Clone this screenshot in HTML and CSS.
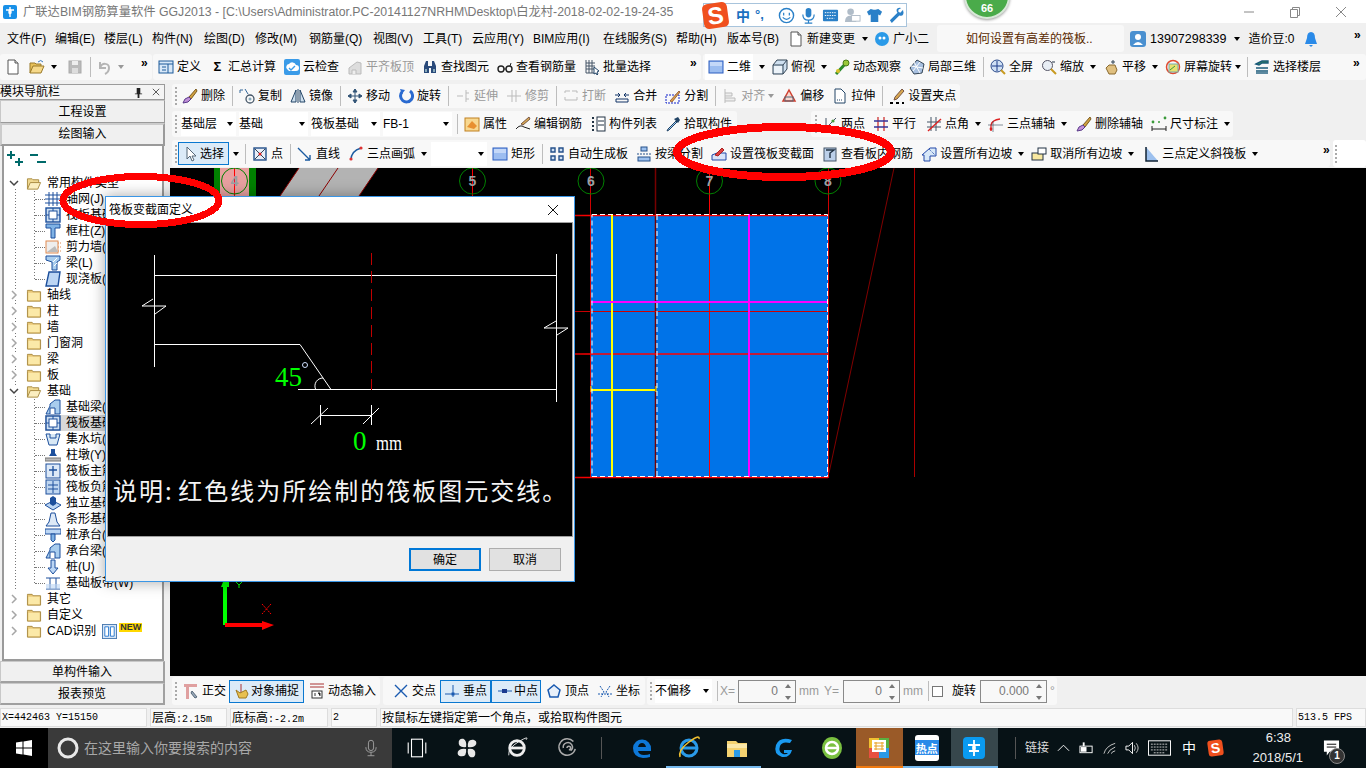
FILE: index.html
```html
<!DOCTYPE html>
<html lang="zh-CN">
<head>
<meta charset="utf-8">
<title>广联达BIM钢筋算量软件 GGJ2013</title>
<link rel="stylesheet" href="styles.css">
</head>
<body>
<svg class="sprite" xmlns="http://www.w3.org/2000/svg">
<defs>
<symbol id="new" viewBox="0 0 16 16"><path d="M3 1h7l3 3v11H3z" fill="#fff" stroke="#555"/><path d="M10 1v3h3" fill="#ddd" stroke="#555"/></symbol>
<symbol id="open" viewBox="0 0 16 16"><path d="M1 14V4h5l1 1h5v3" fill="#e8c15a" stroke="#9a7a2a"/><path d="M1 14l3-7h11l-3 7z" fill="#f6d98a" stroke="#9a7a2a"/><path d="M9 3q3-3 5 0" fill="none" stroke="#3a7ac0"/></symbol>
<symbol id="save" viewBox="0 0 16 16"><rect x="2" y="2" width="12" height="12" fill="#bbb" stroke="#aaa"/><rect x="5" y="2" width="6" height="4" fill="#eee"/><rect x="5" y="9" width="6" height="5" fill="#ddd"/></symbol>
<symbol id="undo" viewBox="0 0 16 16"><path d="M4 3v6h6M4 9c2-6 9-5 9 0 0 3-2 5-4 6" fill="none" stroke="#b5b5b5" stroke-width="2"/></symbol>
<symbol id="def" viewBox="0 0 16 16"><rect x="1" y="2" width="14" height="12" fill="#d8e8f8" stroke="#1d5a9a"/><path d="M1 5h14M4 8h4M4 11h4M10 5v9" stroke="#1d5a9a"/></symbol>
<symbol id="cloud" viewBox="0 0 16 16"><rect width="16" height="16" rx="2" fill="#3a9be8"/><path d="M3 10a3 3 0 0 1 2-5 4 4 0 0 1 7 1 3 3 0 0 1 0 6H5z" fill="#fff"/><path d="M5 9l2 2 4-4" fill="none" stroke="#3a9be8" stroke-width="1.4"/></symbol>
<symbol id="level" viewBox="0 0 16 16"><path d="M2 15V9l8-6 4 1v11z" fill="#ddd" stroke="#bbb"/><path d="M5 15v-4h4v4" fill="#eee" stroke="#bbb"/></symbol>
<symbol id="binoc" viewBox="0 0 16 16"><path d="M2 14V7l2-5h2v5h4V2h2l2 5v7h-5V9H7v5z" fill="#2a4a7a"/><rect x="3" y="10" width="2" height="3" fill="#8ab"/><rect x="11" y="10" width="2" height="3" fill="#8ab"/></symbol>
<symbol id="glass" viewBox="0 0 16 16"><circle cx="4" cy="10" r="3" fill="none" stroke="#222" stroke-width="1.4"/><circle cx="12" cy="10" r="3" fill="none" stroke="#222" stroke-width="1.4"/><path d="M7 10h2M13 7l1-3" stroke="#222"/></symbol>
<symbol id="batch" viewBox="0 0 16 16"><path d="M2 1v13h8M2 4h9M2 7h9M2 10h8M5 1v13M8 1v13" fill="none" stroke="#456"/><path d="M10 8l5 4-2 1 1 2-1 1-1-2-2 1z" fill="#fff" stroke="#246"/></symbol>
<symbol id="sq" viewBox="0 0 16 16"><rect x="1" y="2" width="14" height="12" fill="#9cbdf0" stroke="#2a5cc0"/><rect x="2" y="3" width="12" height="4" fill="#c4d8f8"/></symbol>
<symbol id="top" viewBox="0 0 16 16"><path d="M1 6l4-5h10v9l-4 5H1z" fill="#cfe0f0" stroke="#345"/><path d="M1 6h10v9M11 6l4-5" fill="none" stroke="#345"/><rect x="2" y="7" width="8" height="7" fill="#fff" opacity=".6"/></symbol>
<symbol id="orbit" viewBox="0 0 16 16"><path d="M2 15L12 4" stroke="#2a8a2a" stroke-width="3"/><circle cx="12" cy="4" r="3" fill="#9ac83a" stroke="#4a7a1a"/><circle cx="4" cy="12" r="2" fill="#d8c02a"/></symbol>
<symbol id="local" viewBox="0 0 16 16"><path d="M8 1l7 4-2 9-8 1-4-6z" fill="#a8c0e0" stroke="#345"/><path d="M5 3l6 11M11 3L4 12M2 7l12 2" stroke="#fff"/></symbol>
<symbol id="full" viewBox="0 0 16 16"><circle cx="7" cy="7" r="6" fill="#cfe0f5" stroke="#2a4a8a"/><path d="M7 2v10M2 7h10" stroke="#1a3a8a"/><path d="M11 11l4 4" stroke="#c89a20" stroke-width="2"/></symbol>
<symbol id="zoom" viewBox="0 0 16 16"><circle cx="6.5" cy="6.5" r="5" fill="#e8eef5" stroke="#556"/><path d="M10 10l5 5" stroke="#c89a20" stroke-width="2"/><path d="M11 3h3" stroke="#234"/></symbol>
<symbol id="pan" viewBox="0 0 16 16"><path d="M3 9l3-3 6 0 2 5-2 4H6z" fill="#e0c080" stroke="#8a6a30"/><path d="M10 1v4M8 3h4" stroke="#345"/></symbol>
<symbol id="rot" viewBox="0 0 16 16"><circle cx="8" cy="8" r="6.5" fill="none" stroke="#e04a30" stroke-width="1.5"/><rect x="4" y="5" width="9" height="8" fill="#e8e070" stroke="#7aa"/><path d="M5 11l5-4" stroke="#3a9a3a"/></symbol>
<symbol id="floors" viewBox="0 0 16 16"><path d="M2 5l6-3h6v2H8L5 6zM2 9h12M2 12h12" fill="#3a9a4a" stroke="#1a5a7a" stroke-width="1.4"/><path d="M2 14h12" stroke="#1a5a7a" stroke-width="1.4"/></symbol>
<symbol id="eraser" viewBox="0 0 16 16"><path d="M14 1L7 9l2 2 6-8z" fill="#d0a040" stroke="#7a5a20"/><path d="M7 9l-4 2-2 4 5-1 3-3z" fill="#c090d8" stroke="#5a3a8a"/></symbol>
<symbol id="copy" viewBox="0 0 16 16"><circle cx="11" cy="11" r="4" fill="none" stroke="#456" stroke-width="1.3"/><circle cx="11" cy="11" r="1.5" fill="#8ab"/><path d="M1 2h3M1 2v3M6 1l3 5" stroke="#369" fill="none"/></symbol>
<symbol id="mirror" viewBox="0 0 16 16"><path d="M1 14L6 2v12zM15 14L10 2v12z" fill="#cfe0ee" stroke="#246"/><path d="M8 1v14" stroke="#246"/></symbol>
<symbol id="move" viewBox="0 0 16 16"><path d="M8 1v14M1 8h14M8 1L6 4h4zM8 15l-2-3h4zM1 8l3-2v4zM15 8l-3-2v4z" fill="#357" stroke="#357"/></symbol>
<symbol id="rotate" viewBox="0 0 16 16"><path d="M12 3a6 6 0 1 1-8 1" fill="none" stroke="#2a6ad0" stroke-width="3"/><path d="M2 1l5 1-3 4z" fill="#2a6ad0"/></symbol>
<symbol id="ext" viewBox="0 0 16 16"><path d="M2 8h6M11 2v12M11 5h3M11 11h3" stroke="#bbb" fill="none"/></symbol>
<symbol id="trim" viewBox="0 0 16 16"><path d="M1 8h14M6 2v12M10 2v12" stroke="#bbb" fill="none"/></symbol>
<symbol id="brk" viewBox="0 0 16 16"><path d="M2 5V3h5M9 3h5v2M2 9v3h12V9" stroke="#bbb" fill="none"/></symbol>
<symbol id="merge" viewBox="0 0 16 16"><path d="M1 7h5M15 7h-5M4 5l2 2-2 2M12 5l-2 2 2 2" stroke="#136" fill="none"/><path d="M2 14V11h12v3z" fill="none" stroke="#136"/></symbol>
<symbol id="split" viewBox="0 0 16 16"><rect x="1" y="7" width="13" height="8" fill="none" stroke="#12c" stroke-dasharray="2 1"/><path d="M5 13L14 3l1 1-8 10z" fill="#e0a040" stroke="#964"/></symbol>
<symbol id="align" viewBox="0 0 16 16"><path d="M3 1v14M3 5h7v3H3M3 10h10v3H3" stroke="#bbb" fill="#eee"/></symbol>
<symbol id="offset" viewBox="0 0 16 16"><path d="M8 2l6 11H2z" fill="#f8d8d0" stroke="#d04030" stroke-width="1.5"/><rect x="4" y="9" width="8" height="4" fill="none" stroke="#567"/></symbol>
<symbol id="stretch" viewBox="0 0 16 16"><path d="M3 1h6l4 4v10H3z" fill="#fff" stroke="#246"/><path d="M5 12h6" stroke="#246" stroke-dasharray="1 1"/></symbol>
<symbol id="grips" viewBox="0 0 16 16"><path d="M13 1l2 2-7 8-3 1 1-3z" fill="#d8a850" stroke="#754"/><path d="M1 15h3M7 15h3M13 15h2" stroke="#000" stroke-width="2"/></symbol>
<symbol id="prop" viewBox="0 0 16 16"><rect x="1" y="2" width="14" height="13" fill="#f8d890" stroke="#c08020"/><path d="M3 11l5-6 5 5-3 3z" fill="#e89030"/></symbol>
<symbol id="edit" viewBox="0 0 16 16"><path d="M14 1l1 2-7 6-2-1z" fill="#d8a850" stroke="#754"/><path d="M1 13q4-5 8-2l6 2" fill="none" stroke="#222"/></symbol>
<symbol id="list" viewBox="0 0 16 16"><path d="M2 2h2M2 6h2M2 10h2M2 14h2" stroke="#234" stroke-width="2"/><rect x="7" y="1" width="8" height="14" fill="#fff" stroke="#234"/><path d="M8 5h6M8 9h6" stroke="#234"/></symbol>
<symbol id="drop" viewBox="0 0 16 16"><path d="M11 5l-8 8-1 2 2-1 8-8z" fill="#9cc8f0" stroke="#246"/><path d="M9 3l4 4 2-3-2-3z" fill="#246"/></symbol>
<symbol id="two" viewBox="0 0 16 16"><path d="M2 14L14 2M4 2v13M1 12h14" stroke="#456" fill="none"/><circle cx="11" cy="5" r="1.6" fill="#4a9a3a"/><circle cx="5" cy="11" r="1.3" fill="#c33"/></symbol>
<symbol id="para" viewBox="0 0 16 16"><path d="M5 1v14M11 1v14" stroke="#c33" stroke-width="1.3"/><path d="M1 5h14M1 11h14" stroke="#339" stroke-width="1.3"/></symbol>
<symbol id="ang" viewBox="0 0 16 16"><path d="M5 1v14M10 1v14M1 6h14M1 11h14" stroke="#456" fill="none"/><path d="M2 15L15 3" stroke="#d22" stroke-width="1.4"/></symbol>
<symbol id="arc3" viewBox="0 0 16 16"><path d="M3 15V9q1-5 9-6" fill="none" stroke="#d22" stroke-width="1.3"/><circle cx="3" cy="13" r="1.4" fill="#d22"/><path d="M0 9h15M5 5v11" stroke="#345" stroke-width=".6"/></symbol>
<symbol id="dim" viewBox="0 0 16 16"><path d="M1 10v5M15 10v5M1 13h14" stroke="#222"/><circle cx="2" cy="6" r="1.4" fill="#3a9a3a"/><circle cx="14" cy="2" r="1.4" fill="#3a9a3a"/><circle cx="8" cy="6" r="1" fill="#3a9a3a"/></symbol>
<symbol id="cur" viewBox="0 0 16 16"><path d="M4 1v12l3-3 2 5 2-1-2-4h4z" fill="#fff" stroke="#567"/></symbol>
<symbol id="pt" viewBox="0 0 16 16"><rect x="2" y="2" width="12" height="12" fill="#e8eef8" stroke="#24508a" stroke-width="1.4"/><path d="M3 3l10 10M13 3L3 13" stroke="#345"/><circle cx="8" cy="8" r="1.5" fill="#d22"/></symbol>
<symbol id="ln" viewBox="0 0 16 16"><path d="M1 2l12 12M13 14V9M13 14H8" stroke="#1a5aa0" stroke-width="1.4" fill="none"/></symbol>
<symbol id="arc" viewBox="0 0 16 16"><path d="M3 14Q3 5 13 2" fill="none" stroke="#1a5aa0" stroke-width="1.4"/><circle cx="3" cy="13" r="1.6" fill="#d33"/><circle cx="13" cy="2" r="1.6" fill="#d33"/></symbol>
<symbol id="auto" viewBox="0 0 16 16"><path d="M2 2h4v4H2zM10 2h4v4h-4zM2 10h4v4H2zM10 10h4v4h-4z" fill="#cfe0f5" stroke="#24508a" stroke-width="1.4"/></symbol>
<symbol id="bsplit" viewBox="0 0 16 16"><rect x="5" y="1" width="6" height="4" fill="#9cc0ee" stroke="#24508a"/><path d="M1 8h14" stroke="#24508a" stroke-dasharray="2 1"/><rect x="2" y="11" width="12" height="4" fill="#9cc0ee" stroke="#24508a"/></symbol>
<symbol id="svar" viewBox="0 0 16 16"><path d="M1 9l5-2h9v7H1z" fill="#d8e4f8" stroke="#2248a8"/><path d="M4 9L11 2l2 2-6 6z" fill="#e04040" stroke="#a22"/></symbol>
<symbol id="vrebar" viewBox="0 0 16 16"><rect x="2" y="2" width="12" height="13" fill="#bcd0ea" stroke="#456"/><path d="M4 4h8L8 7v5" fill="none" stroke="#234" stroke-width="1.4"/></symbol>
<symbol id="slope" viewBox="0 0 16 16"><path d="M1 9L9 2h6v8H9v5H3V9z" fill="#d8e8f8" stroke="#2248a8"/><path d="M8 3l6 6" stroke="#2248a8" stroke-dasharray="1 1"/></symbol>
<symbol id="cslope" viewBox="0 0 16 16"><rect x="1" y="7" width="11" height="7" fill="#f8e8a0" stroke="#234"/><rect x="7" y="2" width="8" height="6" fill="#fff" stroke="#234"/></symbol>
<symbol id="tilt" viewBox="0 0 16 16"><path d="M3 1v14h12z" fill="#9cc0ee"/><path d="M3 1v14h12" fill="none" stroke="#123" stroke-width="1.5"/></symbol>
<symbol id="ortho" viewBox="0 0 16 16"><path d="M1 1h13v3H6v12H3V4H1z" fill="#e0a0a0"/><path d="M9 8l5 6-2 1-4-5z" fill="#9ab" stroke="#567"/></symbol>
<symbol id="snap" viewBox="0 0 16 16"><path d="M7 1v14" stroke="#a33"/><path d="M2 7l4 3 6-3 2 4-2 4H5z" fill="#e8c050" stroke="#a07a20"/></symbol>
<symbol id="dyn" viewBox="0 0 16 16"><path d="M1 1h14M1 4h14" stroke="#a33"/><rect x="3" y="8" width="10" height="7" fill="#fff" stroke="#333"/><path d="M6 10v3M9 10h2v3" stroke="#333"/></symbol>
<symbol id="cross" viewBox="0 0 16 16"><path d="M2 2l12 12M14 2L2 14" stroke="#1a5ab0" stroke-width="1.4"/></symbol>
<symbol id="perp" viewBox="0 0 16 16"><path d="M9 2v12M1 11h14" stroke="#1a5ab0"/><rect x="7.5" y="9.5" width="3" height="3" fill="#1a5ab0"/></symbol>
<symbol id="midp" viewBox="0 0 16 16"><path d="M1 8h14" stroke="#1a5ab0"/><rect x="5" y="6" width="5" height="4" fill="#1a3a90"/></symbol>
<symbol id="vert" viewBox="0 0 16 16"><path d="M8 2l6 5-2 7H4L2 7z" fill="#e8f0fa" stroke="#1a5ab0" stroke-width="1.5"/></symbol>
<symbol id="coord" viewBox="0 0 16 16"><path d="M3 3l4 6-3 5M13 3L9 9l3 5M1 11h14" stroke="#1a5ab0" fill="none" stroke-dasharray="2 1"/></symbol>
<symbol id="chev" viewBox="0 0 10 10"><path d="M3 1l4 4-4 4" fill="none" stroke="#a6a6a6" stroke-width="1.5"/></symbol>
<symbol id="chevd" viewBox="0 0 10 10"><path d="M1 3l4 4 4-4" fill="none" stroke="#444" stroke-width="1.5"/></symbol>
<symbol id="folder" viewBox="0 0 16 16"><path d="M1 4V2.500h5l1 1.500h8v10H1z" fill="#e9c776" stroke="#a88a40"/><rect x="2" y="5" width="12" height="8" fill="#fbe9a8"/></symbol>
<symbol id="folderopen" viewBox="0 0 16 16"><path d="M1 14V3h5l1 1h6v3" fill="#f0d890" stroke="#a88a40"/><path d="M1 14l3-7h11l-3 7z" fill="#fbeec0" stroke="#a88a40"/></symbol>
<symbol id="t-grid" viewBox="0 0 16 16"><path d="M0 4h16M0 8h16M0 12h16M4 1v14M8 1v14M12 1v14" stroke="#1c4f9c"/></symbol>
<symbol id="t-raft" viewBox="0 0 16 16"><rect x="1" y="1" width="14" height="14" fill="#cfe0f2" stroke="#1c4f9c" stroke-width="1.4"/><rect x="4" y="4" width="8" height="8" fill="#fff" stroke="#1c4f9c"/><path d="M1 8h3M12 8h3M8 1v3M8 12v3" stroke="#1c4f9c"/></symbol>
<symbol id="t-col" viewBox="0 0 16 16"><path d="M1 1h14v4H10v10H6V5H1z" fill="#7fb2e5" stroke="#1c4f9c"/></symbol>
<symbol id="t-wall" viewBox="0 0 16 16"><rect x="1" y="2" width="12" height="12" fill="#eee" stroke="#e08a50"/><path d="M13 4h3M13 8h3M13 12h3" stroke="#e08a50" stroke-dasharray="1 1"/><path d="M2 13l8-6 3 6z" fill="#bbb"/></symbol>
<symbol id="t-beam" viewBox="0 0 16 16"><path d="M1 1h14v4l-3 2v8H7V7L1 5z" fill="#a9cdee" stroke="#1c4f9c"/><path d="M8 7l4-4M9 11l3-3" stroke="#fff"/></symbol>
<symbol id="t-slab" viewBox="0 0 16 16"><path d="M4 1h11l-2 14H1z" fill="#bcd6f4" stroke="#1c4f9c" stroke-width="1.4"/></symbol>
<symbol id="t-fb" viewBox="0 0 16 16"><path d="M1 15l4-8V5l5-4h5v14z" fill="#a9cdee" stroke="#1c4f9c"/><path d="M5 15V9h5v6" fill="#fff" stroke="#1c4f9c"/></symbol>
<symbol id="t-sump" viewBox="0 0 16 16"><path d="M1 3h4v4h6V3h4M1 3l3 11h8l3-11" fill="#d8e8f5" stroke="#1c4f9c"/></symbol>
<symbol id="t-pier" viewBox="0 0 16 16"><path d="M6 2h4v4l2 3H4l2-3z" fill="#1c4f9c"/><rect x="0" y="11" width="16" height="3" fill="#bbb" stroke="#777"/></symbol>
<symbol id="t-main" viewBox="0 0 16 16"><rect x="1" y="1" width="14" height="14" fill="#dde9f7" stroke="#1c4f9c"/><path d="M8 3v10M4 7h8" stroke="#1c4f9c" stroke-width="1.3"/></symbol>
<symbol id="t-neg" viewBox="0 0 16 16"><rect x="1" y="1" width="14" height="14" fill="#bfd6f0" stroke="#1c4f9c"/><path d="M8 2v12M3 6h10M3 10h10" stroke="#1c4f9c"/></symbol>
<symbol id="t-iso" viewBox="0 0 16 16"><path d="M0 10l8-4 8 4-8 5z" fill="#bcd6f4" stroke="#1c4f9c"/><path d="M5 3l3-2 3 2v6l-3 2-3-2z" fill="#1c4f9c"/></symbol>
<symbol id="t-strip" viewBox="0 0 16 16"><path d="M1 15l3-4 2-9h4l2 9 3 4z" fill="#dde9f7" stroke="#1c4f9c"/></symbol>
<symbol id="t-cap" viewBox="0 0 16 16"><rect x="0" y="2" width="16" height="5" fill="#bcd6f4" stroke="#1c4f9c"/><path d="M6 7h4v6l-2 2-2-2z" fill="#7fb2e5" stroke="#1c4f9c"/></symbol>
<symbol id="t-pile" viewBox="0 0 16 16"><path d="M6 1h4v8h3l-5 6-5-6h3z" fill="#bcd6f4" stroke="#1c4f9c"/></symbol>
<symbol id="t-band" viewBox="0 0 16 16"><path d="M1 3h14M1 14h14M5 3v11M11 3v11" stroke="#1c4f9c" fill="none"/><rect x="1" y="9" width="14" height="5" fill="#bcd6f4" opacity=".6"/></symbol>
</defs>
</svg>

<div class="app">
  <header class="titlebar">
    <svg class="app-icon" viewBox="0 0 14 14"><rect width="14" height="14" rx="2" fill="#1890e8"/><path d="M7 2v10M3 5h3a2 2 0 0 1 0 4M11 5H8a2 2 0 0 0 0 4" fill="none" stroke="#fff" stroke-width="1.4"/></svg>
    <span class="title-text">广联达BIM钢筋算量软件 GGJ2013 - [C:\Users\Administrator.PC-20141127NRHM\Desktop\白龙村-2018-02-02-19-24-35</span>
    <div class="win-btns">
      <svg viewBox="0 0 12 12"><path d="M1 6h10" stroke="#888"/></svg>
      <svg viewBox="0 0 12 12"><path d="M1.500 3.500h7v8h-7zM3.500 3.500v-2h7v8h-2" fill="none" stroke="#888"/></svg>
      <svg viewBox="0 0 12 12"><path d="M1 1l10 10M11 1L1 11" stroke="#888"/></svg>
    </div>
  </header>

  <nav class="menubar">
    <span class="m w48">文件(F)</span><span class="m w49">编辑(E)</span><span class="m w48">楼层(L)</span><span class="m w52">构件(N)</span><span class="m w51">绘图(D)</span><span class="m w54">修改(M)</span><span class="m w64">钢筋量(Q)</span><span class="m w50">视图(V)</span><span class="m w49">工具(T)</span><span class="m w61">云应用(Y)</span><span class="m w70">BIM应用(I)</span><span class="m w73">在线服务(S)</span><span class="m w51">帮助(H)</span><span class="m w61">版本号(B)</span>
    <svg class="i"><use href="#new"/></svg><span class="m m6">新建变更</span><span class="car"></span>
    <svg class="i face" viewBox="0 0 16 16"><circle cx="8" cy="8" r="7" fill="#2a9ae8"/><circle cx="6" cy="7" r="1.500" fill="#fff"/><circle cx="10" cy="7" r="1.500" fill="#fff"/></svg><span class="m m6">广小二</span>
    <div class="ask">如何设置有高差的筏板..</div>
    <svg class="i user" viewBox="0 0 16 16"><rect width="16" height="16" rx="3" fill="#4a90d0"/><circle cx="8" cy="6" r="3" fill="#fff"/><path d="M3 14q5-6 10 0z" fill="#fff"/></svg><span class="phone">13907298339</span><span class="car"></span><span class="bean">造价豆:0</span>
    <svg class="i bell" viewBox="0 0 16 16"><path d="M8 1q4 0 4 6l2 6H2l2-6q0-6 4-6zM6 14h4l-2 2z" fill="#2a8ae8"/></svg>
    <span class="more">»</span>
  </nav>

  <div class="tb-row top-row">
    <div class="grp g-a">
      <svg class="i"><use href="#new"/></svg><svg class="i ml8"><use href="#open"/></svg><span class="car"></span><svg class="i ml10"><use href="#save"/></svg><span class="sep"></span><svg class="i ml8"><use href="#undo"/></svg><span class="car off"></span><span class="more">»</span>
    </div>
    <div class="grp g-b">
      <span class="t t0"><svg class="i"><use href="#def"/></svg>定义</span>
      <span class="t t9"><span class="sigma">Σ</span>汇总计算</span>
      <span class="t"><svg class="i"><use href="#cloud"/></svg>云检查</span>
      <span class="t off"><svg class="i"><use href="#level"/></svg>平齐板顶</span>
      <span class="t"><svg class="i"><use href="#binoc"/></svg>查找图元</span>
      <span class="t"><svg class="i"><use href="#glass"/></svg>查看钢筋量</span>
      <span class="t"><svg class="i"><use href="#batch"/></svg>批量选择</span>
      <span class="more">»</span>
    </div>
    <div class="grp g-c">
      <span class="t t0 mode"><svg class="i"><use href="#sq"/></svg>二维</span><span class="car"></span>
      <span class="t"><svg class="i"><use href="#top"/></svg>俯视</span><span class="car"></span>
      <span class="t"><svg class="i"><use href="#orbit"/></svg>动态观察</span>
      <span class="t"><svg class="i"><use href="#local"/></svg>局部三维</span>
      <span class="sep"></span>
      <span class="t"><svg class="i"><use href="#full"/></svg>全屏</span>
      <span class="t"><svg class="i"><use href="#zoom"/></svg>缩放</span><span class="car"></span>
      <span class="t"><svg class="i"><use href="#pan"/></svg>平移</span><span class="car"></span>
      <span class="t"><svg class="i"><use href="#rot"/></svg>屏幕旋转</span><span class="car tight"></span>
      <span class="sep"></span>
      <span class="t"><svg class="i"><use href="#floors"/></svg>选择楼层</span>
      <span class="more">»</span>
    </div>
  </div>

  <div class="main">
    <aside class="nav">
      <div class="nav-head"><span>模块导航栏</span>
        <svg class="pin" viewBox="0 0 10 12"><path d="M3 1h4v6h2v1H6v4H4V8H1V7h2z" fill="#222"/></svg>
        <svg class="pin x" viewBox="0 0 10 10"><path d="M1 1l8 8M9 1L1 9" stroke="#333"/></svg>
      </div>
      <div class="nav-btn">工程设置</div>
      <div class="nav-btn pressed">绘图输入</div>
      <div class="tree-panel">
        <div class="tree-tools">
          <svg viewBox="0 0 16 16"><path d="M4 1v8M0 5h8M12 8v8M8 12h8" stroke="#006a6a" stroke-width="2"/></svg>
          <svg viewBox="0 0 16 16"><path d="M0 5h8M7 12h9" stroke="#006a6a" stroke-width="2"/></svg>
        </div>
        <div class="tree">
          <div class="row"><svg class="chev"><use href="#chevd"/></svg><svg class="fd"><use href="#folderopen"/></svg>常用构件类型</div>
          <div class="kids">
            <div class="leaf"><svg class="i"><use href="#t-grid"/></svg>轴网(J)</div>
            <div class="leaf"><svg class="i"><use href="#t-raft"/></svg>筏板基础(M)</div>
            <div class="leaf"><svg class="i"><use href="#t-col"/></svg>框柱(Z)</div>
            <div class="leaf"><svg class="i"><use href="#t-wall"/></svg>剪力墙(Q)</div>
            <div class="leaf"><svg class="i"><use href="#t-beam"/></svg>梁(L)</div>
            <div class="leaf"><svg class="i"><use href="#t-slab"/></svg>现浇板(B)</div>
          </div>
          <div class="row"><svg class="chev"><use href="#chev"/></svg><svg class="fd"><use href="#folder"/></svg>轴线</div>
          <div class="row"><svg class="chev"><use href="#chev"/></svg><svg class="fd"><use href="#folder"/></svg>柱</div>
          <div class="row"><svg class="chev"><use href="#chev"/></svg><svg class="fd"><use href="#folder"/></svg>墙</div>
          <div class="row"><svg class="chev"><use href="#chev"/></svg><svg class="fd"><use href="#folder"/></svg>门窗洞</div>
          <div class="row"><svg class="chev"><use href="#chev"/></svg><svg class="fd"><use href="#folder"/></svg>梁</div>
          <div class="row"><svg class="chev"><use href="#chev"/></svg><svg class="fd"><use href="#folder"/></svg>板</div>
          <div class="row"><svg class="chev"><use href="#chevd"/></svg><svg class="fd"><use href="#folderopen"/></svg>基础</div>
          <div class="kids">
            <div class="leaf"><svg class="i"><use href="#t-fb"/></svg>基础梁(F)</div>
            <div class="leaf selected"><svg class="i"><use href="#t-raft"/></svg>筏板基础(M)</div>
            <div class="leaf"><svg class="i"><use href="#t-sump"/></svg>集水坑(K)</div>
            <div class="leaf"><svg class="i"><use href="#t-pier"/></svg>柱墩(Y)</div>
            <div class="leaf"><svg class="i"><use href="#t-main"/></svg>筏板主筋(R)</div>
            <div class="leaf"><svg class="i"><use href="#t-neg"/></svg>筏板负筋(F)</div>
            <div class="leaf"><svg class="i"><use href="#t-iso"/></svg>独立基础(D)</div>
            <div class="leaf"><svg class="i"><use href="#t-strip"/></svg>条形基础(T)</div>
            <div class="leaf"><svg class="i"><use href="#t-cap"/></svg>桩承台(V)</div>
            <div class="leaf"><svg class="i"><use href="#t-fb"/></svg>承台梁(F)</div>
            <div class="leaf"><svg class="i"><use href="#t-pile"/></svg>桩(U)</div>
            <div class="leaf"><svg class="i"><use href="#t-band"/></svg>基础板带(W)</div>
          </div>
          <div class="row"><svg class="chev"><use href="#chev"/></svg><svg class="fd"><use href="#folder"/></svg>其它</div>
          <div class="row"><svg class="chev"><use href="#chev"/></svg><svg class="fd"><use href="#folder"/></svg>自定义</div>
          <div class="row"><svg class="chev"><use href="#chev"/></svg><svg class="fd"><use href="#folder"/></svg>CAD识别
            <svg class="cad" viewBox="0 0 16 16"><rect x=".5" y=".5" width="15" height="15" fill="#d8e6f6" stroke="#4a7ab0"/><path d="M3 3h4v10H3zM9 3h4v10H9z" fill="#fff" stroke="#2a7ad0"/></svg><span class="new">NEW</span></div>
        </div>
      </div>
      <div class="nav-btn foot">单构件输入</div>
      <div class="nav-btn foot">报表预览</div>
    </aside>

    <section class="work">
      <div class="tb-row r2">
        <div class="grp g-edit">
          <span class="grip"></span>
          <span class="t t0"><svg class="i"><use href="#eraser"/></svg>删除</span><span class="sep"></span>
          <span class="t"><svg class="i"><use href="#copy"/></svg>复制</span>
          <span class="t"><svg class="i"><use href="#mirror"/></svg>镜像</span><span class="sep"></span>
          <span class="t"><svg class="i"><use href="#move"/></svg>移动</span>
          <span class="t"><svg class="i"><use href="#rotate"/></svg>旋转</span><span class="sep"></span>
          <span class="t off"><svg class="i"><use href="#ext"/></svg>延伸</span>
          <span class="t off"><svg class="i"><use href="#trim"/></svg>修剪</span><span class="sep"></span>
          <span class="t off"><svg class="i"><use href="#brk"/></svg>打断</span>
          <span class="t"><svg class="i"><use href="#merge"/></svg>合并</span>
          <span class="t"><svg class="i"><use href="#split"/></svg>分割</span><span class="sep"></span>
          <span class="t off"><svg class="i"><use href="#align"/></svg>对齐</span><span class="car off tight"></span>
          <span class="t"><svg class="i"><use href="#offset"/></svg>偏移</span>
          <span class="t"><svg class="i"><use href="#stretch"/></svg>拉伸</span><span class="sep"></span>
          <span class="t"><svg class="i"><use href="#grips"/></svg>设置夹点</span>
        </div>
      </div>
      <div class="tb-row r3">
        <div class="grp g-layer">
          <span class="grip"></span>
          <span class="combo c1">基础层<span class="car"></span></span>
          <span class="combo c2">基础<span class="car"></span></span>
          <span class="combo c2">筏板基础<span class="car"></span></span>
          <span class="combo c2">FB-1<span class="car"></span></span>
          <span class="sep s-c"></span>
          <span class="t"><svg class="i"><use href="#prop"/></svg>属性</span>
          <span class="t"><svg class="i"><use href="#edit"/></svg>编辑钢筋</span>
          <span class="t"><svg class="i"><use href="#list"/></svg>构件列表</span>
          <span class="t"><svg class="i"><use href="#drop"/></svg>拾取构件</span>
        </div>
        <div class="grp g-aux">
          <span class="grip"></span>
          <span class="t t0"><svg class="i"><use href="#two"/></svg>两点</span>
          <span class="t"><svg class="i"><use href="#para"/></svg>平行</span>
          <span class="t t10"><svg class="i"><use href="#ang"/></svg>点角</span><span class="car"></span>
          <span class="t"><svg class="i"><use href="#arc3"/></svg>三点辅轴</span><span class="car"></span>
          <span class="t t10"><svg class="i"><use href="#eraser"/></svg>删除辅轴</span>
          <span class="t"><svg class="i"><use href="#dim"/></svg>尺寸标注</span><span class="car"></span>
        </div>
      </div>
      <div class="tb-row r4">
        <div class="grp g-draw">
          <span class="grip"></span>
          <span class="t t0 act sel"><svg class="i"><use href="#cur"/></svg>选择</span><span class="car"></span><span class="sep"></span>
          <span class="t"><svg class="i"><use href="#pt"/></svg>点</span><span class="sep"></span>
          <span class="t"><svg class="i"><use href="#ln"/></svg>直线</span>
          <span class="t"><svg class="i"><use href="#arc"/></svg>三点画弧</span><span class="car"></span>
          <span class="combo c3"><span class="car"></span></span>
          <span class="t t5"><svg class="i"><use href="#sq"/></svg>矩形</span><span class="sep"></span>
          <span class="t"><svg class="i"><use href="#auto"/></svg>自动生成板</span>
          <span class="t"><svg class="i"><use href="#bsplit"/></svg>按梁分割</span>
          <span class="t"><svg class="i"><use href="#svar"/></svg>设置筏板变截面</span>
          <span class="t"><svg class="i"><use href="#vrebar"/></svg>查看板内钢筋</span>
          <span class="t"><svg class="i"><use href="#slope"/></svg>设置所有边坡</span><span class="car"></span>
          <span class="t"><svg class="i"><use href="#cslope"/></svg>取消所有边坡</span><span class="car"></span>
          <span class="t t10"><svg class="i"><use href="#tilt"/></svg>三点定义斜筏板</span><span class="car"></span>
          <span class="more">»</span>
        </div>
        <div class="grp g-end"><span class="grip"></span></div>
      </div>

      <div class="canvas">
        <svg class="cad-view" viewBox="170 168 1196 508">
          <rect x="170" y="168" width="1196" height="508" fill="#000"/>
          <rect x="214" y="168" width="42" height="28" fill="#008000"/>
          <rect x="220" y="168" width="29" height="28" fill="#e8a0a0"/>
          <path d="M299 168H378L359 196H280Z" fill="#b3b3b3"/>
          <path d="M299 168L280 196M338 168L319 196M378 168L359 196" stroke="#8b0000" fill="none"/>
          <rect x="591" y="215" width="237" height="262" fill="#0073e8"/>
          <path d="M234.500 168V196M472.500 168V196M709.500 168V477" stroke="#f00"/>
          <path d="M590.500 168V478M828.500 168V478" stroke="#d00000"/>
          <path d="M655.500 168V477" stroke="#700" stroke-width="1.500"/>
          <path d="M914.500 168V477" stroke="#a00"/>
          <path d="M894 168L829 473" stroke="#800000"/>
          <path d="M575 215.500H828M575 354H828M575 477.500H828" stroke="#f00" stroke-width="1.500"/>
          <path d="M575 311.500H828" stroke="#d00000"/>
          <path d="M612 214V477M591 390H655" stroke="#ff0" stroke-width="2"/>
          <path d="M591 386V392M656 386V392" stroke="#ff0"/>
          <path d="M749 214V477M591 302H828" stroke="#f0f" stroke-width="2"/>
          <path d="M592 214.500H827.500V476.500H592ZM657 215V477" fill="none" stroke="#fff" stroke-dasharray="5 3"/>
          <g fill="none" stroke="#008000">
            <circle cx="234.500" cy="181" r="13"/><circle cx="472.500" cy="181" r="13"/><circle cx="591" cy="181" r="13"/><circle cx="709.500" cy="181" r="13"/><circle cx="828" cy="181" r="13"/>
          </g>
          <g class="axis-num">
            <text x="234.500" y="186">4</text><text x="472.500" y="186">5</text><text x="591" y="186">6</text><text x="709.500" y="186">7</text><text x="828" y="186">8</text>
          </g>
          <path d="M225 625V585" stroke="#0f0" stroke-width="4"/>
          <path d="M221 587H229V582H223Z" fill="#0f0"/>
          <path d="M236 582L239 585L242 582M239 585V588" stroke="#0f0" fill="none"/>
          <path d="M225 625H264" stroke="#f00" stroke-width="4"/>
          <path d="M262 621L274 625L262 630Z" fill="#f00"/>
          <path d="M262 604L271 614M271 604L262 614" stroke="#f00" stroke-dasharray="2 1"/>
        </svg>
      </div>

      <div class="tb-row r5">
        <div class="grp g-s1">
          <span class="grip"></span>
          <span class="t t0"><svg class="i"><use href="#ortho"/></svg>正交</span>
          <span class="t act snapb"><svg class="i"><use href="#snap"/></svg>对象捕捉</span>
          <span class="t t5"><svg class="i"><use href="#dyn"/></svg>动态输入</span>
        </div>
        <div class="grp g-s2">
          <span class="t t0"><svg class="i"><use href="#cross"/></svg>交点</span>
          <span class="t act pb"><svg class="i"><use href="#perp"/></svg>垂点</span><span class="t act pb2"><svg class="i"><use href="#midp"/></svg>中点</span>
          <span class="t t5"><svg class="i"><use href="#vert"/></svg>顶点</span>
          <span class="t"><svg class="i"><use href="#coord"/></svg>坐标</span>
        </div>
        <div class="grp g-s3">
          <span class="grip"></span>
          <span class="combo c4">不偏移<span class="car"></span></span><span class="sep s-off"></span>
          <span class="lbl off">X=</span><span class="num n1">0<span class="spin"></span></span><span class="lbl off">mm</span>
          <span class="lbl off l2">Y=</span><span class="num n3">0<span class="spin"></span></span><span class="lbl off">mm</span><span class="sep s-off"></span>
          <span class="chk"></span><span class="lbl rot">旋转</span><span class="num n2">0.000<span class="spin"></span></span><span class="lbl off">°</span>
        </div>
      </div>
    </section>
  </div>

  <footer class="status">
    <span class="cell mono w1">X=442463 Y=15150</span>
    <span class="cell mono w2"><span class="cjk">层高</span>:2.15m</span>
    <span class="cell mono w3"><span class="cjk">底标高</span>:-2.2m</span>
    <span class="cell mono w4">2</span>
    <span class="cell w5">按鼠标左键指定第一个角点，或拾取构件图元</span>
    <span class="cell mono w6">513.5 FPS</span>
  </footer>

  <div class="taskbar">
    <div class="start"><svg viewBox="0 0 16 16"><path d="M0 2.500L6.500 1.600V7.500H0ZM7.500 1.500L16 0V7.500H7.500ZM0 8.500H6.500V14.400L0 13.500ZM7.500 8.500H16V16L7.500 14.500Z" fill="#fff"/></svg></div>
    <div class="search">
      <svg class="cortana" viewBox="0 0 22 22"><circle cx="11" cy="11" r="9" fill="none" stroke="#e8e8e8" stroke-width="3"/></svg>
      <span>在这里输入你要搜索的内容</span>
      <svg class="mic" viewBox="0 0 14 20"><rect x="4" y="1" width="6" height="12" rx="3" fill="none" stroke="#aaa"/><path d="M1 9q0 6 6 6t6-6M7 15v4M3 19h8" fill="none" stroke="#aaa"/></svg>
    </div>
    <div class="slots">
      <div class="slot w50"><svg viewBox="0 0 20 20"><rect x="5" y="2" width="10" height="16" fill="none" stroke="#fff"/><path d="M2 5v10M18 5v10" stroke="#fff"/></svg></div>
      <div class="slot w50"><svg viewBox="0 0 24 24"><path d="M11 11Q2 12 3 5q1-4 5-3 4 2 3 9zM13 11Q12 2 19 3q4 1 3 5-2 4-9 3zM13 13Q22 12 21 19q-1 4-5 3-4-2-3-9zM11 13Q12 22 5 21q-4-1-3-5 2-4 9-3z" fill="#e8e8e8"/></svg></div>
      <div class="slot w50"><svg viewBox="0 0 24 24"><circle cx="12" cy="12" r="8" fill="none" stroke="#eee" stroke-width="3"/><path d="M5 12h14" stroke="#eee" stroke-width="3"/><path d="M3 20Q2 12 14 5t8-2" fill="none" stroke="#eee"/></svg></div>
      <div class="slot w50"><svg viewBox="0 0 24 24"><path d="M19 5A9 9 0 1 0 21 13M8 12a5 5 0 1 1 8 3M12 12a2 2 0 1 1 2 2" fill="none" stroke="#aaa" stroke-width="1.600"/></svg></div>
      <div class="task-sep"></div>
      <div class="slot"><svg viewBox="0 0 24 24"><path d="M3 12a9 9 0 0 1 18 1v2H8q1 4 6 4 4 0 6-1v3q-3 1-7 1-10-1-10-10zm5-1h8q-1-4-4-4t-4 4z" fill="#0e78d8"/></svg></div>
      <div class="slot run"><svg viewBox="0 0 24 24"><circle cx="12" cy="12" r="8" fill="none" stroke="#2a9ae8" stroke-width="3"/><path d="M5 12h14" stroke="#2a9ae8" stroke-width="3"/><path d="M3 21Q1 14 12 6t10-3" fill="none" stroke="#f0c030" stroke-width="1.500"/></svg></div>
      <div class="slot run"><svg viewBox="0 0 24 24"><path d="M2 5h9l2 2h9v14H2z" fill="#f4d270"/><rect x="2" y="8" width="20" height="4" fill="#fae7a8"/><rect x="9" y="14" width="6" height="7" fill="#2a9ae8"/></svg></div>
      <div class="slot"><svg viewBox="0 0 24 24"><path d="M20 4Q8 0 4 9q-3 9 6 12 8 1 10-7h-8v3h4q-2 2-5 1-5-2-3-8 2-5 10-3z" fill="#1a9af0"/></svg></div>
      <div class="slot"><svg viewBox="0 0 24 24"><ellipse cx="12" cy="12" rx="10" ry="11" fill="#7ac040"/><circle cx="12" cy="12" r="6" fill="none" stroke="#fff" stroke-width="2.500"/><path d="M6 12h12" stroke="#fff" stroke-width="2.500"/></svg></div>
      <div class="slot pic"><svg viewBox="0 0 24 24"><rect x="2" y="2" width="10" height="10" fill="#f0c030"/><rect x="12" y="2" width="10" height="10" fill="#5ab040"/><rect x="2" y="12" width="10" height="10" fill="#e85040"/><rect x="12" y="12" width="10" height="10" fill="#2a9ae8"/><rect x="5" y="4" width="14" height="12" fill="#fff"/><path d="M7 7h10M7 10h10M7 13h10M9 6v8M15 6v8" stroke="#e8a020"/></svg></div>
      <div class="slot run"><span class="hot">热点</span></div>
      <div class="slot app-on"><svg viewBox="0 0 24 24"><rect x="1" y="1" width="22" height="22" rx="4" fill="#0a9af0"/><path d="M12 4v16M6 9h4a3 3 0 0 1 0 6H7M18 9h-4a3 3 0 0 0 0 6h3" fill="none" stroke="#fff" stroke-width="1.800"/></svg></div>
    </div>
    <div class="tray">
      <span class="task-sep2"></span>
      <span class="tray-t link">链接</span>
      <svg class="tr tr-up" viewBox="0 0 14 14"><path d="M1 10l6-6 6 6" fill="none" stroke="#fff"/></svg>
      <svg class="tr" viewBox="0 0 16 14"><rect x="1" y="5" width="13" height="7" fill="none" stroke="#fff"/><rect x="2" y="6" width="6" height="5" fill="#fff"/><path d="M5 5V1" stroke="#fff" stroke-width="2"/></svg>
      <svg class="tr" viewBox="0 0 16 14"><path d="M1 13Q3 5 13 2M5 13Q6 9 13 6M9 13q0-2 4-3" fill="none" stroke="#ccc"/></svg>
      <svg class="tr tr-s" viewBox="0 0 16 14"><path d="M1 5h3l4-4v12L4 9H1z" fill="none" stroke="#fff"/><path d="M10 4q2 3 0 6M12 2q4 5 0 10" fill="none" stroke="#ccc"/></svg>
      <svg class="tr tr-k" viewBox="0 0 24 16"><rect x=".5" y=".5" width="23" height="15" fill="none" stroke="#fff"/><path d="M3 4h18M3 7h18M3 10h18M6 13h12" stroke="#ccc" stroke-dasharray="2 1"/></svg>
      <span class="tray-t zh">中</span>
      <span class="sg small">S</span>
      <div class="clock"><span>6:38</span><span>2018/5/1</span></div>
      <div class="notify"><svg viewBox="0 0 18 18"><path d="M1 1h16v12H7l-3 4v-4H1z" fill="#fff"/><path d="M4 5h10M4 8h10" stroke="#000"/></svg><span class="note-n">1</span></div>
    </div>
  </div>

  <div class="badge66"><span>66</span></div>

  <div class="ime">
    <span class="sg">S</span>
    <span class="ime-zh">中</span>
    <span class="ime-p">°,</span>
    <svg viewBox="0 0 18 18"><circle cx="9" cy="9" r="7.500" fill="none" stroke="#2a80c8" stroke-width="1.500"/><path d="M6 6v3M12 6v3M5 11q4 4 8 0" fill="none" stroke="#2a80c8" stroke-width="1.300"/></svg>
    <svg viewBox="0 0 18 18"><rect x="6" y="1" width="6" height="10" rx="3" fill="#2a80c8"/><path d="M3 8q0 6 6 6t6-6M9 14v3M5 17h8" fill="none" stroke="#2a80c8" stroke-width="1.300"/></svg>
    <svg viewBox="0 0 18 18"><rect x="1" y="3" width="16" height="12" rx="1" fill="#2a80c8"/><path d="M3 6h12M3 9h12M5 12h8" stroke="#fff" stroke-dasharray="1.500 1"/></svg>
    <svg viewBox="0 0 18 18"><circle cx="7" cy="5" r="3.500" fill="#b0bcc8"/><path d="M1 16q0-7 6-7t6 7z" fill="#b0bcc8"/><rect x="8" y="9" width="9" height="6" fill="#fff" stroke="#b0bcc8"/></svg>
    <svg viewBox="0 0 18 18"><path d="M5 2L1 5l2 4 2-1v8h8V8l2 1 2-4-4-3-3 1H8z" fill="#2a80c8"/></svg>
    <svg viewBox="0 0 18 18"><path d="M16 3l-3 3-2-1V3l3-2q-4-1-5 2 0 2 1 3l-8 8 2 3 8-8q3 1 4-1 1-2 0-4z" fill="#2a80c8"/></svg>
  </div>

  <div class="dialog">
    <div class="dlg-title"><span>筏板变截面定义</span>
      <svg viewBox="0 0 12 12"><path d="M1 1l10 10M11 1L1 11" stroke="#111"/></svg>
    </div>
    <svg class="dlg-draw" viewBox="108 224 464 313">
      <rect x="108" y="224" width="464" height="313" fill="#000"/>
      <g fill="none" stroke="#fff">
        <path d="M154.500 256V368M154 276.500H556.500M556.500 255V403M154 345.500H300L331 390.500M298 390.500H556.500"/>
        <path d="M153 300L142 307H166L155 315M556 322L544 329H568L557 336"/>
        <path d="M315.500 390A8 8 0 0 1 323 379"/>
        <path d="M320.500 406V426M371.500 406V426M320 416.500H371.500M311 425L328 409M363 425L379 409"/>
        <circle cx="305" cy="366" r="2.500" stroke="#cfe0ff"/>
      </g>
      <path d="M371.500 254V391" stroke="#c00000" stroke-dasharray="12 6"/>
      <text class="d-green" x="275" y="387">45</text>
      <text class="d-green" x="353" y="451">0</text>
      <text class="d-mm" x="376" y="451" textLength="26" lengthAdjust="spacingAndGlyphs">mm</text>
      <text class="d-note" x="113" y="501">说明:<tspan dx="4.500">红色线为所绘制的筏板图元交线。</tspan></text>
    </svg>
    <div class="dlg-foot">
      <button class="btn primary">确定</button>
      <button class="btn">取消</button>
    </div>
  </div>

  <svg class="marks" viewBox="0 0 1366 768">
    <ellipse cx="141" cy="200.500" rx="78" ry="24" fill="none" stroke="#f00" stroke-width="7" shape-rendering="crispEdges"/>
    <ellipse cx="784" cy="152" rx="107" ry="25" fill="none" stroke="#f00" stroke-width="8" shape-rendering="crispEdges"/>
  </svg>
</div>
</body>
</html>
```

FILE: styles.css
```css
* { box-sizing: border-box; }
html, body { margin: 0; padding: 0; }
body { width: 1366px; height: 768px; overflow: hidden; background: #f0f0f0; color: #000;
  font: 12px/16px "Liberation Sans", "Noto Sans CJK SC", sans-serif; }
.sprite { width: 0; height: 0; position: absolute; }
.app { position: relative; width: 1366px; height: 768px; display: flex; flex-direction: column; overflow: hidden; }
svg { flex: none; display: block; }
.i { width: 16px; height: 16px; }

/* title */
.titlebar { height: 23px; background: #fff; display: flex; align-items: center; padding-left: 3px; }
.app-icon { width: 14px; height: 14px; }
.title-text { margin-left: 6px; font-size: 12.3px; color: #777; white-space: nowrap; }
.win-btns { margin-left: auto; display: flex; }
.win-btns svg { width: 12px; height: 12px; margin-right: 34px; }
.win-btns svg:last-child { margin-right: 19px; }

/* menu */
.menubar { height: 31px; display: flex; align-items: center; padding-left: 7px; white-space: nowrap; }
.m { flex: none; }
.w48 { width: 48px; } .w49 { width: 49px; } .w50 { width: 50px; } .w51 { width: 51px; } .w52 { width: 52px; } .w54 { width: 54px; }
.w61 { width: 61px; } .w64 { width: 64px; } .w70 { width: 70px; } .w73 { width: 73px; }
.m6 { margin-left: 3px; }
.face { margin-left: 6px; }
.menubar .car { margin: 0 0 0 7px; }
.ask { width: 187px; height: 27px; margin-left: 8px; background: #f8f8f8; color: #5a2a00; line-height: 28px; padding-left: 29px; border-radius: 3px; }
.user { margin-left: 6px; }
.phone { margin-left: 4px; font-size: 12.5px; }
.menubar .phone + .car { margin-left: 7px; }
.bean { margin-left: 9px; }
.bell { margin-left: 8px; }
.more { font: 700 12px/12px "Liberation Mono", monospace; margin-left: auto; margin-top: -6px; }
.menubar .more { padding-right: 5px; }

/* toolbars */
.tb-row { display: flex; align-items: stretch; flex: none; }
.grp { display: flex; align-items: center; background: #f8f8f8; border-radius: 3px; white-space: nowrap; flex: none; }
.top-row { height: 26px; gap: 1px; margin-bottom: 4px; }
.g-a { width: 152px; padding-left: 5px; }
.g-b { width: 548px; padding-left: 5px; }
.g-c { width: 663px; padding-left: 2px; margin-left: 1px; padding-right: 6px; }
.g-a .more, .g-b .more { padding-right: 4px; }
.ml8 { margin-left: 8px; } .ml10 { margin-left: 11px; }
.t { display: inline-flex; align-items: center; gap: 3px; margin-left: 8px; flex: none; height: 22px; }
.t0 { margin-left: 0; } .t5 { margin-left: 5px; } .t9 { margin-left: 9px; } .t10 { margin-left: 10px; }
.off { color: #9a9a9a; }
.sigma { width: 15px; text-align: center; font-weight: 700; font-size: 13px; }
.sep { width: 1px; height: 20px; background: #bdbdbd; margin: 0 -2px 0 7px; flex: none; }
.s-c { margin-left: 5px; }
.g-a .sep + .i { margin-left: 7px; }
.car { width: 0; height: 0; border: 3px solid transparent; border-top: 4px solid #000; border-bottom: 0; margin-left: 6px; margin-right: -1px; flex: none; }
.car.off { border-top-color: #999; }
.car.tight { margin-left: 3px; }
.mode { background: #fff; padding-left: 3px; height: 26px; width: 48px; }
.grip { width: 2px; height: 18px; margin-right: 3px; flex: none;
  background: repeating-linear-gradient(#aaa 0 2px, transparent 2px 4px); }

.main { flex: 1; display: flex; min-height: 0; height: 622px; }
.work { width: 1196px; display: flex; flex-direction: column; }
.r2 { height: 24px; margin-left: 2px; margin-bottom: 3px; }
.r3 { height: 26px; margin-left: 2px; margin-bottom: 3px; }
.r4 { height: 27px; margin-left: 2px; margin-bottom: 1px; }
.r5 { height: 28px; margin-left: 2px; margin-top: 1px; gap: 3px; }
.g-edit { width: 788px; padding-left: 3px; }
.g-layer { width: 565px; padding-left: 3px; }
.g-aux { width: 422px; margin-left: 74px; padding-left: 4px; }
.g-draw { width: 1158px; padding-left: 3px; }
.g-end { width: 33px; margin-left: 3px; background: #fff; padding-left: 2px; }
.g-edit .t0 { margin-left: 2px; }
.g-aux .t0 { margin-left: 1px; }
.r3 .grip { margin-right: 4px; }
.r4 .grip { margin-right: 1px; }
.combo { height: 24px; background: #fff; display: inline-flex; align-items: center; flex: none; position: relative; }
.combo .car { position: absolute; right: 3px; top: 10px; margin: 0; }
.c1 { width: 55px; } .c2 { width: 69px; margin-left: 3px; }
.c3 { width: 56px; margin-left: 5px; }
.c4 { width: 57px; margin-left: 0; }
.act { border: 1px solid #0a78d0; background: #dcebf8; height: 23px; }
.sel { width: 51px; padding-left: 4px; gap: 0; justify-content: flex-start; }
.sel .i { margin-right: 1px; }
.g-draw .sel + .car { margin-left: 4px; }

.canvas { height: 508px; flex: none; }
.cad-view { width: 1196px; height: 508px; }
.axis-num text { font: 700 14px "Liberation Sans", sans-serif; fill: #9aa0a4; text-anchor: middle; }

.g-s1 { width: 208px; padding-left: 3px; }
.g-s1 .t0 { margin-left: 3px; }
.snapb { margin-left: 3px; padding: 0 4px; width: 75px; gap: 1px; }
.g-s2 { width: 262px; padding-left: 10px; }
.pb { margin-left: 4px; padding: 0 3px; width: 51px; gap: 3px; }
.pb2 { margin-left: 0; padding: 0 3px 0 5px; width: 50px; gap: 1px; }
.g-s3 { width: 410px; margin-left: -1px; padding-left: 3px; }
.s-off { margin-left: 5px; margin-right: 2px; }
.lbl { flex: none; }
.l2 { margin-left: 5px; }
.num { height: 23px; border: 1px solid #8a8a8a; background: #f8f8f8; display: inline-flex; align-items: center; justify-content: flex-end; color: #777; padding-right: 17px; margin: 0 3px 0 3px; position: relative; flex: none; }
.n1 { width: 58px; } .n2 { width: 67px; } .n3 { width: 57px; margin-left: 4px; }
.spin { position: absolute; right: 4px; top: 4px; width: 6px; height: 14px; }
.spin::before, .spin::after { content: ""; position: absolute; left: 0; width: 0; height: 0; border: 3px solid transparent; }
.spin::before { top: -1px; border-bottom: 4px solid #777; border-top: 0; }
.spin::after { bottom: -1px; border-top: 4px solid #777; border-bottom: 0; }
.chk { width: 11px; height: 11px; border: 1px solid #777; background: #fff; margin-left: 1px; flex: none; }
.rot { margin: 0 1px 0 9px; }

/* navigator */
.nav { width: 170px; flex: none; padding-right: 5px; display: flex; flex-direction: column; }
.nav-head { height: 16px; display: flex; align-items: center; border: 1px solid #9a9a9a; border-width: 1px 1px 1px 0; font-size: 12px; background: #f4f4f4; }
.nav-head span { flex: 1; }
.pin { width: 9px; height: 11px; margin-right: 9px; }
.pin.x { width: 8px; height: 8px; margin-right: 4px; }
.nav-btn { height: 23px; text-align: center; line-height: 23px; font-size: 12px; border: 1px solid #c8c8c8; border-bottom-color: #9a9a9a; border-right-color: #9a9a9a; background: #f0f0f0; }
.pressed { border: 2px solid #9a9a9a; border-top-color: #ccc; border-left-color: #ccc; line-height: 19px; }
.foot { height: 22px; line-height: 20px; border: 1px solid #c8c8c8; border-bottom: 2px solid #a0a0a0; border-right: 2px solid #a0a0a0; }
.tree-panel { height: 515px; margin: 0 1px 0 2px; background: #fff; border: 1px solid #9a9a9a; border-top: 0; border-width: 0 2px 2px 2px; }
.tree-tools { height: 29px; display: flex; gap: 7px; padding: 4px 0 0 3px; }
.tree-tools svg { width: 16px; height: 16px; }
.tree { background: repeating-linear-gradient(#777 0 1px, transparent 1px 3px) 11px 14px / 1px 402px no-repeat; }
.row { height: 16px; display: flex; align-items: center; white-space: nowrap; padding-left: 5px; }
.chev { width: 10px; height: 10px; background: #fff; }
.fd { width: 16px; height: 15px; margin: 0 5px 0 7px; }
.kids { margin-left: 30px; padding-left: 1px; background: repeating-linear-gradient(#777 0 1px, transparent 1px 3px) 0 0 / 1px calc(100% - 8px) no-repeat; }
.leaf { height: 16px; display: flex; align-items: center; white-space: nowrap; }
.leaf::before { content: ""; width: 10px; margin-right: 0; border-top: 1px dotted #777; flex: none; }
.leaf .i { margin-right: 5px; }
.selected { background: linear-gradient(90deg, transparent 10px, #d9d9d9 10px); }
.cad { width: 15px; height: 15px; margin-left: 6px; }
.new { font: 700 9px/9px "Liberation Sans", sans-serif; background: #ffd800; color: #333; margin: -8px 0 0 2px; padding: 0 1px; }

/* status */
.status { height: 19px; margin-top: 2px; display: flex; gap: 3px; flex: none; }
.cell { background: #f9f9f9; border: 1px solid #ddd; line-height: 18px; padding-left: 1px; white-space: nowrap; flex: none; }
.mono { font-family: "Liberation Mono", "Noto Sans CJK SC", monospace; font-size: 10px; }
.cjk { font: 12px/16px "Noto Sans CJK SC", sans-serif; }
.w1 { width: 147px; } .w2 { width: 77px; } .w3 { width: 98px; } .w4 { width: 46px; } .w5 { width: 913px; } .w6 { width: 70px; }

/* taskbar */
.taskbar { height: 40px; margin-top: 1px; background: #071216; display: flex; flex: none; color: #fff; }
.start { width: 48px; background: #000; display: flex; align-items: center; justify-content: center; }
.start svg { width: 16px; height: 16px; }
.search { width: 344px; background: #3a3a3a; display: flex; align-items: center; color: #a8a8a8; font-size: 14px; }
.cortana { width: 22px; height: 22px; margin-left: 9px; }
.search span { margin-left: 5px; }
.mic { width: 12px; height: 18px; margin-left: auto; margin-right: 15px; }
.slots { display: flex; flex: none; }
.slot { width: 47.5px; height: 40px; display: flex; align-items: center; justify-content: center; position: relative; flex: none; }
.slot.w50 { width: 50px; }
.slot svg { width: 24px; height: 24px; }
.slot.w50 svg { width: 22px; height: 22px; }
.task-sep { width: 26px; position: relative; }
.task-sep::after { content: ""; display: block; width: 1px; height: 22px; background: #555; margin: 9px 0 0 9px; }
.run { box-shadow: inset 0 -2px 0 #76b9ed; }
.pic { background: #9a5a28; box-shadow: inset 0 -2px 0 #f07a10; }
.app-on { background: #37474c; box-shadow: inset 0 -2px 0 #76b9ed; }
.hot { width: 24px; height: 26px; background: linear-gradient(#fff 0 5px, #2a8ae8 5px 20px, #fff 20px); border-radius: 3px; color: #fff; font: 700 11px/26px "Noto Sans CJK SC", sans-serif; text-align: center; white-space: nowrap; }
.tray { display: flex; align-items: center; flex: 1; position: relative; }
.task-sep2 { width: 1px; height: 22px; background: #555; margin-left: 17px; }
.tray-t { color: #ddd; font-size: 12px; flex: none; }
.link { margin-left: 9px; }
.tr { width: 15px; height: 14px; margin-left: 9px; }
.tr-up { width: 13px; margin-left: 8px; }
.tr-s { margin-left: 7px; }
.tr-k { width: 23px; height: 16px; margin-left: 8px; }
.zh { margin-left: 11px; color: #fff; font-size: 14px; }
.sg { width: 25px; height: 25px; background: #f0501e; border-radius: 5px; color: #fff; font: 700 24px/25px "Liberation Sans", sans-serif; text-align: center; transform: rotate(-8deg); flex: none; }
.sg.small { width: 15px; height: 16px; font-size: 14px; line-height: 16px; border-radius: 3px; margin-left: 12px; }
.clock { display: flex; flex-direction: column; align-items: flex-end; margin-left: 20px; width: 60px; font-size: 13px; line-height: 20px; color: #eee; flex: none; }
.clock span:first-child { padding-right: 12px; }
.notify { margin-left: auto; margin-right: 26px; position: relative; background: none; }
.notify svg { width: 17px; height: 18px; }
.note-n { position: absolute; left: 6px; top: 9px; width: 16px; height: 16px; border-radius: 50%; background: #333; border: 1px solid #888; color: #fff; font: 700 10px/14px "Liberation Sans", sans-serif; text-align: center; }

/* overlays */
.badge66 { position: absolute; left: 964px; top: -27px; width: 46px; height: 46px; border-radius: 50%; background: #4aab4a; border: 2px solid #d8e8d8; box-shadow: 0 1px 3px rgba(0,0,0,.4); color: #fff; font: 700 11px/12px "Liberation Sans", sans-serif; text-align: center; }
.badge66 span { display: block; margin-top: 27px; }
.ime { position: absolute; left: 703px; top: 3px; width: 204px; height: 24px; background: #fff; border: 1px solid #a8c4dc; display: flex; align-items: center; }
.ime .sg { margin: 0 8px 0 -1px; }
.ime svg { width: 17px; height: 17px; margin-left: 5px; }
.ime-zh { color: #1a70c0; font: 700 14px/16px "Noto Sans CJK SC", sans-serif; width: 16px; }
.ime-p { color: #1a70c0; font: 700 13px/16px "Liberation Sans", sans-serif; margin: 0 2px 0 3px; width: 16px; }

.dialog { position: absolute; left: 105px; top: 196px; width: 470px; height: 386px; background: #f0f0f0; border: 1px solid #3a96e6; display: flex; flex-direction: column; box-shadow: 0 0 14px rgba(0,0,0,.35); }
.dlg-title { height: 26px; background: #fff; display: flex; align-items: center; justify-content: space-between; padding: 0 15px 0 3px; flex: none; }
.dlg-title svg { width: 12px; height: 12px; }
.dlg-draw { width: 464px; height: 313px; margin-left: 2px; outline: 1px solid #a0a0a0; flex: none; }
.d-green { font: 27px "Liberation Serif", serif; fill: #0f0; }
.d-mm { font: 21px "Liberation Serif", serif; fill: #fff; }
.d-note { font: 24px "Noto Sans CJK SC", sans-serif; fill: #f4f4f4; letter-spacing: 2px; }
.dlg-foot { flex: 1; display: flex; justify-content: flex-end; align-items: center; gap: 8px; padding: 2px 13px 0 0; }
.btn { width: 72px; height: 23px; border: 1px solid #adadad; background: #e1e1e1; font: inherit; padding: 0; }
.primary { border: 2px solid #0078d7; }
.marks { position: absolute; left: 0; top: 0; width: 1366px; height: 768px; pointer-events: none; }
```
